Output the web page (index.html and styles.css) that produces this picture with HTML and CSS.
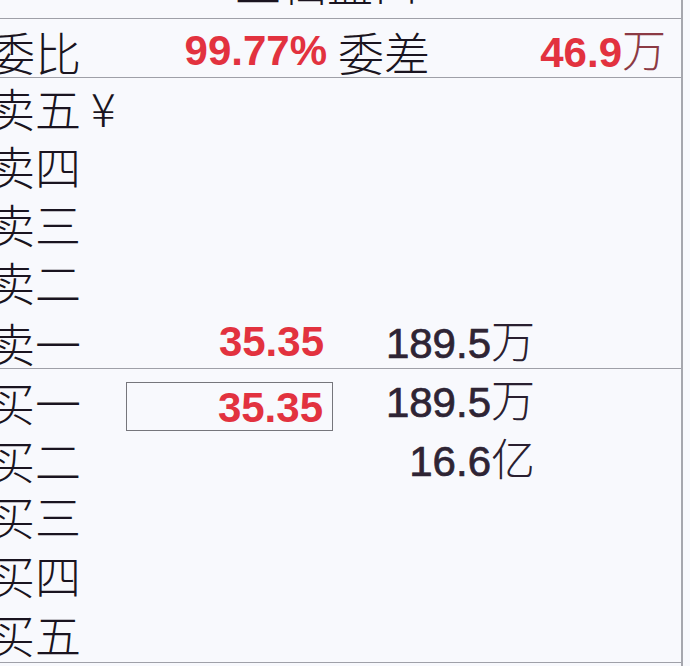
FILE: index.html
```html
<!DOCTYPE html>
<html lang="zh">
<head>
<meta charset="utf-8">
<link rel="stylesheet" href="styles.css">
</head>
<body>
<div class="panel">
  <div class="header"><span class="title">五档盘口</span></div>
  <div class="ratio-row">
    <span class="label">委比</span>
    <span class="num red bold ratio-val">99.77%</span>
    <span class="label diff-label">委差</span>
    <span class="num red bold diff-val">46.9<span class="cjk unit-red">万</span></span>
  </div>
  <div class="section sell">
    <div class="row"><span class="label">卖五<span class="yen">¥</span></span><span class="price"></span><span class="vol"></span></div>
    <div class="row"><span class="label">卖四</span><span class="price"></span><span class="vol"></span></div>
    <div class="row"><span class="label">卖三</span><span class="price"></span><span class="vol"></span></div>
    <div class="row"><span class="label">卖二</span><span class="price"></span><span class="vol"></span></div>
    <div class="row"><span class="label">卖一</span><span class="price num red bold">35.35</span><span class="vol num">189.5<span class="cjk">万</span></span></div>
  </div>
  <div class="section buy">
    <div class="row"><span class="label">买一</span><span class="price num red bold boxed">35.35</span><span class="vol num">189.5<span class="cjk">万</span></span></div>
    <div class="row"><span class="label">买二</span><span class="price"></span><span class="vol num">16.6<span class="cjk">亿</span></span></div>
    <div class="row"><span class="label">买三</span><span class="price"></span><span class="vol"></span></div>
    <div class="row"><span class="label">买四</span><span class="price"></span><span class="vol"></span></div>
    <div class="row"><span class="label">买五</span><span class="price"></span><span class="vol"></span></div>
  </div>
</div>
</body>
</html>
```
FILE: styles.css
```css
html, body {
  margin: 0;
  padding: 0;
}
body {
  width: 690px;
  height: 666px;
  overflow: hidden;
  background: #f8f9fd;
  color: #1a1420;
  font-family: "Noto Sans CJK SC", "Noto Sans", sans-serif;
}
.panel {
  width: 683px;
  height: 666px;
  border-right: 2px solid #a6a7ae;
  box-sizing: border-box;
}
.header {
  height: 18px;
  border-bottom: 1px solid #9fa0a8;
  overflow: hidden;
}
.title {
  display: block;
  padding-left: 235px;
  font-size: 46px;
  line-height: 46px;
  font-weight: 300;
  margin-top: -42px;
}
.label {
  font-family: "Noto Sans CJK SC", sans-serif;
  font-size: 46px;
  font-weight: 300;
  line-height: 58px;
  margin-left: -11px;
  white-space: nowrap;
}
.yen {
  margin-left: 10px;
}
.num {
  font-family: "Liberation Sans", Arial, sans-serif;
  font-size: 42px;
  line-height: 58px;
  color: #2e2434;
  white-space: nowrap;
}
.vol.num {
  -webkit-text-stroke: 0.7px #2e2434;
}
.vol .cjk {
  -webkit-text-stroke: 0;
}
.bold {
  font-weight: 700;
}
.red {
  color: #e2323f;
}
.cjk {
  font-family: "Noto Sans CJK SC", sans-serif;
  font-weight: 300;
  font-size: 44px;
  color: #2a2030;
}
.unit-red {
  color: #8c3a44;
}
.ratio-row {
  height: 58px;
  border-bottom: 1px solid #9fa0a8;
  display: grid;
  grid-template-columns: 135px 192px 200px 1fr;
  align-items: center;
}
.ratio-val {
  text-align: right;
}
.diff-label {
  margin-left: 11px;
}
.diff-val {
  text-align: right;
  padding-right: 15px;
}
.section {
  border-bottom: 1px solid #9fa0a8;
}
.sell .row {
  height: 58px;
}
.buy .row {
  height: 58.6px;
}
.row {
  display: grid;
  grid-template-columns: 126px 207px 203px 1fr;
  align-items: center;
}
.price {
  text-align: right;
  padding-right: 9px;
}
.vol {
  text-align: right;
  padding-right: 1px;
}
.boxed {
  border: 1px solid #76767c;
  height: 49px;
  line-height: 49px;
  align-self: end;
  box-sizing: border-box;
  margin-bottom: 1px;
}
```
